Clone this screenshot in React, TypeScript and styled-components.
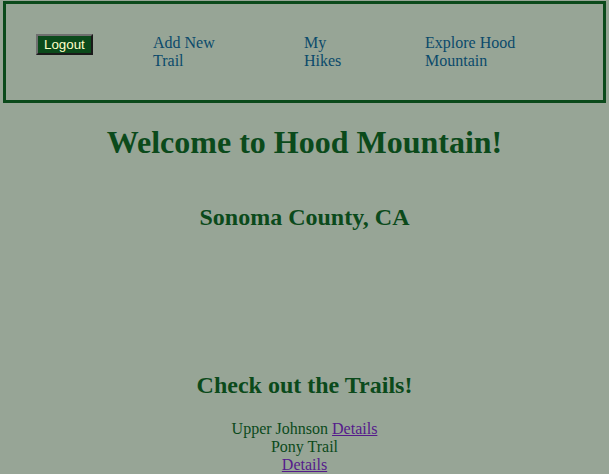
import React from "react";
import styled, { createGlobalStyle } from "styled-components";

const Global = createGlobalStyle`
  html, body {
    margin: 0;
    padding: 0;
    background: #97a596;
  }
  body {
    font-family: "Liberation Serif", "Times New Roman", serif;
    font-size: 16px;
    color: #0b4a1b;
  }
`;

const Page = styled.div`
  display: flex;
  flex-direction: column;
  align-items: stretch;
  padding: 1px 3px 0 3px;
`;

const NavBar = styled.nav`
  border: 3px solid #0b4a1b;
  box-sizing: border-box;
  height: 102px;
  padding: 30px 30px;
  display: grid;
  grid-template-columns: 117px 151px 121px auto;
  align-items: start;
`;

const LogoutButton = styled.button`
  justify-self: start;
  font-family: "Liberation Sans", Arial, sans-serif;
  font-size: 13.33px;
  line-height: 15px;
  padding: 1px 6px;
  border: 2px outset #6f6f6f;
  background: #0b4a1b;
  color: #ffffc8;
  cursor: pointer;
`;

const NavLink = styled.a<{ $width: number }>`
  display: block;
  width: ${(p) => p.$width}px;
  color: #0b4a6b;
  text-decoration: none;
  line-height: 18px;
  font-size: 16px;
`;

const Title = styled.h1`
  margin: 21px 0 0;
  text-align: center;
  font-size: 32px;
  font-weight: bold;
  color: #0b4a1b;
`;

const SubTitle = styled.h2<{ $top: number }>`
  margin: ${(p) => p.$top}px 0 0;
  text-align: center;
  font-size: 24px;
  font-weight: bold;
  color: #0b4a1b;
`;

const TrailList = styled.div`
  margin-top: 21px;
  display: flex;
  flex-direction: column;
  align-items: center;
  line-height: 18px;
`;

const TrailRow = styled.div`
  text-align: center;
`;

const DetailsLink = styled.a`
  color: #551a8b;
  text-decoration: underline;
`;

export default function App() {
  return (
    <>
      <Global />
      <Page>
        <NavBar>
          <LogoutButton>Logout</LogoutButton>
          <NavLink href="#" $width={90}>
            Add New Trail
          </NavLink>
          <NavLink href="#" $width={50}>
            My Hikes
          </NavLink>
          <NavLink href="#" $width={120}>
            Explore Hood Mountain
          </NavLink>
        </NavBar>
        <Title>Welcome to Hood Mountain!</Title>
        <SubTitle $top={43}>Sonoma County, CA</SubTitle>
        <SubTitle $top={141}>Check out the Trails!</SubTitle>
        <TrailList>
          <TrailRow>
            Upper Johnson <DetailsLink href="#">Details</DetailsLink>
          </TrailRow>
          <TrailRow>Pony Trail</TrailRow>
          <TrailRow>
            <DetailsLink href="#">Details</DetailsLink>
          </TrailRow>
        </TrailList>
      </Page>
    </>
  );
}
